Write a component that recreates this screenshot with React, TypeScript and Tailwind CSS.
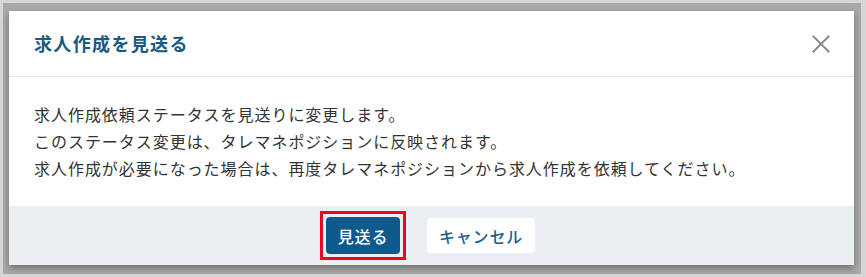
import React from 'react';

const jp = { fontFamily: '"Noto Sans CJK JP", "Noto Sans", sans-serif' };

function CloseIcon() {
  return (
    <svg width="18" height="18" viewBox="0 0 18 18" fill="none" stroke="#8c8c8c" strokeWidth="2" strokeLinecap="square">
      <path d="M1.5 1.5 L16.5 16.5 M16.5 1.5 L1.5 16.5" />
    </svg>
  );
}

export default function App() {
  return (
    <div className="w-[866px] h-[277px] bg-[#d6d6d6] pt-[3px] pl-[3px] pr-[5px] pb-[3px]" style={jp}>
      <div className="h-full bg-[#a9a9a9] pt-[8px] pl-[6px] pr-[4px]">
        <div className="w-[845px] bg-white shadow-[0_3px_7px_rgba(0,0,0,0.35)]">
          <div className="flex items-center justify-between h-[66px] pl-[25px] pr-[24px] border-b border-[#e3e6e8]">
            <h2 className="text-[18px] font-bold tracking-[0.075em] text-[#185a82]">求人作成を見送る</h2>
            <button className="w-[18px] h-[18px]"><CloseIcon /></button>
          </div>
          <div className="px-[25px] pt-[24px] pb-[24px] text-[16px] leading-[27px] tracking-[0.06em] text-[#333]">
            <p>求人作成依頼ステータスを見送りに変更します。</p>
            <p>このステータス変更は、タレマネポジションに反映されます。</p>
            <p>求人作成が必要になった場合は、再度タレマネポジションから求人作成を依頼してください。</p>
          </div>
          <div className="flex items-center justify-center gap-[21px] h-[59px] bg-[#eaeff2] pr-[8px]">
            <div className="border-[3px] border-[#f0041e] p-[3px]">
              <button className="block h-[37px] w-[74px] rounded-[4px] bg-[#0e5a8c] text-white text-[16px] font-medium tracking-[0.05em]">
                見送る
              </button>
            </div>
            <button className="h-[35px] w-[108px] rounded-[4px] bg-white text-[#1a5f8c] text-[16px] font-medium tracking-[0.05em]">
              キャンセル
            </button>
          </div>
        </div>
      </div>
    </div>
  );
}
